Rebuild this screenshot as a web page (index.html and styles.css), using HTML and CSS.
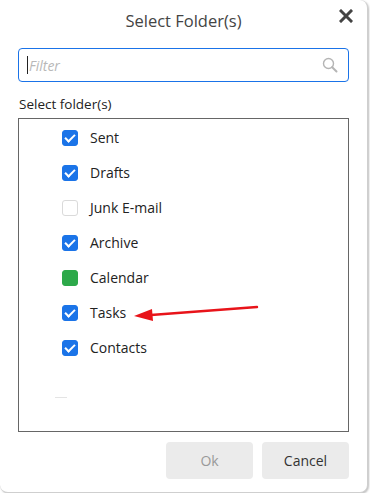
FILE: index.html
```html
<!DOCTYPE html>
<html lang="en">

<head>
	<meta charset="UTF-8">
	<title>Select Folder(s)</title>
	<link rel="stylesheet" href="styles.css">
</head>

<body>
	<div class="dialog">
		<div class="dialog-header">
			<h1>Select Folder(s)</h1>
			<button class="close-btn" title="Close">
				<svg width="14" height="14" viewBox="0 0 14 14">
					<path d="M2 2 L12 12 M12 2 L2 12" stroke="#444" stroke-width="3" stroke-linecap="square" />
				</svg>
			</button>
		</div>
		<div class="filter-box">
			<span class="caret"></span>
			<input type="text" placeholder="Filter">
			<svg class="search-icon" width="16" height="16" viewBox="0 0 16 16">
				<circle cx="6.5" cy="6.5" r="5" fill="none" stroke="#b5b5b5" stroke-width="1.4" />
				<line x1="10.2" y1="10.2" x2="14.5" y2="14.5" stroke="#b5b5b5" stroke-width="2" stroke-linecap="round" />
			</svg>
		</div>
		<div class="list-label">Select folder(s)</div>
		<div class="folder-list">
			<label class="folder-row"><span class="check checked"></span>Sent</label>
			<label class="folder-row"><span class="check checked"></span>Drafts</label>
			<label class="folder-row"><span class="check"></span>Junk E-mail</label>
			<label class="folder-row"><span class="check checked"></span>Archive</label>
			<label class="folder-row"><span class="check calendar"></span>Calendar</label>
			<label class="folder-row"><span class="check checked"></span>Tasks</label>
			<label class="folder-row"><span class="check checked"></span>Contacts</label>
			<div class="list-stub"></div>
		</div>
		<div class="dialog-footer">
			<button class="btn" disabled>Ok</button>
			<button class="btn">Cancel</button>
		</div>
		<svg class="arrow" width="130" height="20" viewBox="0 0 130 20">
			<line x1="126" y1="3" x2="20" y2="11" stroke="#e8141a" stroke-width="2.4" stroke-linecap="round" />
			<polygon points="3,12 21,5 22,17" fill="#e8141a" />
		</svg>
	</div>
</body>

</html>
```

FILE: styles.css
```css
body {
	margin: 0;
	background: #fff;
	font-family: "Open Sans", "Noto Sans", sans-serif;
	color: #222;
}

.dialog {
	position: relative;
	width: 368px;
	height: 493px;
	box-sizing: border-box;
	border-right: 1px solid #cfcfcf;
	border-bottom: 1px solid #cfcfcf;
	border-radius: 0 8px 8px 8px;
	box-shadow: 1px 1px 2px rgba(0, 0, 0, 0.25);
	background: #fff;
	padding: 0 18px 0 18px;
}

.dialog-header {
	position: relative;
	height: 46px;
	display: flex;
	justify-content: center;
	align-items: center;
}

.dialog-header h1 {
	margin: 0 0 6px;
	font-size: 16.5px;
	font-weight: normal;
	color: #444;
}

.close-btn {
	position: absolute;
	right: -4px;
	top: 9px;
	border: none;
	background: none;
	padding: 0;
	line-height: 0;
	cursor: pointer;
}

.filter-box {
	position: relative;
	height: 34px;
	box-sizing: border-box;
	border: 1px solid #1a73e8;
	border-radius: 4px;
	display: flex;
	align-items: center;
	padding: 0 10px 0 8px;
	margin-top: 2px;
}

.filter-box input {
	flex: 1;
	border: none;
	outline: none;
	font-family: inherit;
	font-size: 14px;
	padding: 0 0 0 1px;
	background: none;
}

.filter-box input::placeholder {
	color: #b8b8b8;
	font-style: italic;
}

.caret {
	width: 1px;
	height: 18px;
	background: #222;
}

.list-label {
	margin: 12px 0 0 1px;
	font-size: 13.5px;
	line-height: 20px;
	height: 24px;
}

.folder-list {
	height: 314px;
	box-sizing: border-box;
	border: 1px solid #666;
	padding-top: 1px;
}

.folder-row {
	display: flex;
	align-items: center;
	height: 35px;
	padding-left: 43px;
	font-size: 14px;
}

.check {
	width: 16px;
	height: 16px;
	box-sizing: border-box;
	border-radius: 3px;
	border: 1px solid #dadada;
	margin-right: 12px;
	position: relative;
}

.check.checked {
	background: #1b74e8;
	border-color: #1b74e8;
}

.check.checked::after {
	content: "";
	position: absolute;
	left: 4px;
	top: 1.5px;
	width: 4px;
	height: 8px;
	border: solid #fff;
	border-width: 0 2px 2px 0;
	transform: rotate(45deg);
}

.check.calendar {
	background: #2da94a;
	border-color: #2da94a;
}

.list-stub {
	width: 12px;
	height: 1px;
	background: #e4e4e4;
	margin: 32px 0 0 36px;
}

.dialog-footer {
	display: flex;
	justify-content: flex-end;
	gap: 9px;
	margin-top: 10px;
}

.btn {
	width: 87px;
	height: 37px;
	border: none;
	border-radius: 4px;
	background: #ebebeb;
	font-family: inherit;
	font-size: 14px;
	color: #333;
}

.btn:disabled {
	color: #999;
}

.arrow {
	position: absolute;
	left: 131px;
	top: 304px;
}
```
